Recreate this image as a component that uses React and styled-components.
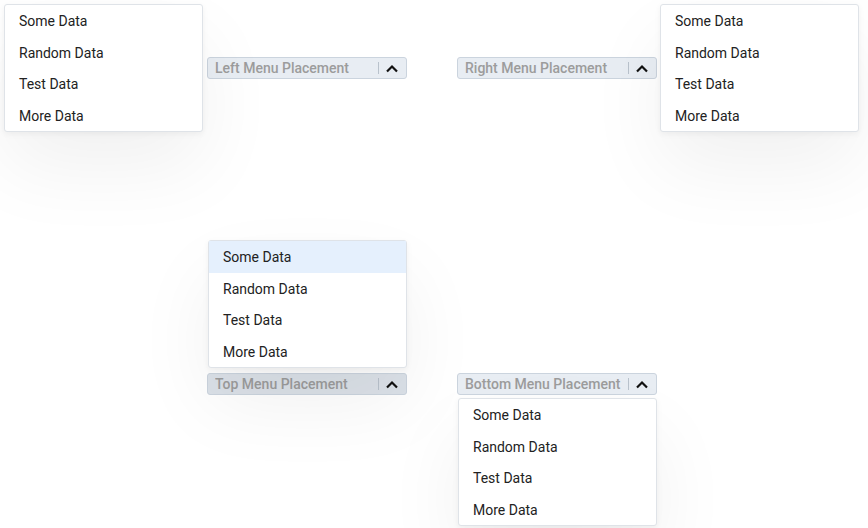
import * as React from 'react'
import styled, {createGlobalStyle, css} from 'styled-components';

const GlobalStyle = createGlobalStyle`
    html, body {
        margin: 0;
        padding: 0;
        background: #ffffff;
        font-family: Roboto, "Liberation Sans", Arial, sans-serif;
    }
`;

const items = ["Some Data", "Random Data", "Test Data", "More Data"];

const placements = [
    {label: "Left Menu Placement", side: "left"},
    {label: "Right Menu Placement", side: "right"},
    {label: "Top Menu Placement", side: "top", active: true, highlight: 0},
    {label: "Bottom Menu Placement", side: "bottom"},
];

function Chevron() {
    return (
        <svg width="14" height="9" viewBox="0 0 14 9">
            <polyline points="2,7.5 7,2.5 12,7.5" fill="none" stroke="#111" strokeWidth="2.2" strokeLinejoin="miter"/>
        </svg>
    );
}

function Dropdown({label, side, active, highlight}) {
    return (
        <Cell>
            <Toggle $active={active}>
                <span className="label">{label}</span>
                <Arrow><Chevron/></Arrow>
            </Toggle>
            <Menu $side={side}>
                {items.map((item, i) => (
                    <Item key={item} $hover={highlight === i}>{item}</Item>
                ))}
            </Menu>
        </Cell>
    );
}

export default function App() {
    return (
        <Page>
            <GlobalStyle/>
            <Grid>
                {placements.map(p => <Dropdown key={p.label} {...p}/>)}
            </Grid>
        </Page>
    );
}

const Page = styled.div`
    width: 868px;
    height: 528px;
    overflow: hidden;
    position: relative;
`;

const Grid = styled.div`
    display: grid;
    grid-template-columns: 200px 200px;
    column-gap: 50px;
    row-gap: 294px;
    padding: 57px 0 0 207px;
`;

const Cell = styled.div`
    position: relative;
    width: 200px;
    height: 22px;
`;

const Toggle = styled.div`
    box-sizing: border-box;
    display: flex;
    align-items: center;
    width: 200px;
    height: 22px;
    border: 1px solid #cbd4de;
    border-radius: 3px;
    background: ${p => p.$active ? '#dbe1e8' : '#e8edf3'};
    color: #9c9c9c;
    font-size: 14px;
    font-weight: 500;
    padding-left: 7px;
    .label {
        flex: 1;
        white-space: nowrap;
        overflow: hidden;
        line-height: 20px;
    }
`;

const Arrow = styled.div`
    display: flex;
    align-items: center;
    justify-content: center;
    width: 28px;
    height: 20px;
    position: relative;
    &::before {
        content: "";
        position: absolute;
        left: 0;
        top: 4px;
        height: 12px;
        border-left: 1px solid #b9c2cc;
    }
`;

const sideStyles = {
    left: css`
        right: calc(100% + 4px);
        top: 50%;
        transform: translateY(-50%);
    `,
    right: css`
        left: calc(100% + 3px);
        top: 50%;
        transform: translateY(-50%);
    `,
    top: css`
        left: 1px;
        bottom: calc(100% + 5px);
    `,
    bottom: css`
        left: 1px;
        top: calc(100% + 3px);
    `,
};

const Menu = styled.div`
    position: absolute;
    z-index: 2;
    box-sizing: border-box;
    width: 199px;
    background: #ffffff;
    border: 1px solid #dfe3e8;
    border-radius: 3px;
    box-shadow: 0 2px 6px rgba(0, 0, 0, 0.05), 0 36px 80px rgba(0, 0, 0, 0.06);
    ${p => sideStyles[p.$side]}
`;

const Item = styled.div`
    box-sizing: border-box;
    height: 31.5px;
    padding: 2px 14px 0;
    line-height: 29px;
    font-size: 14px;
    color: #222222;
    background: ${p => p.$hover ? '#e5f0fd' : 'transparent'};
`;
